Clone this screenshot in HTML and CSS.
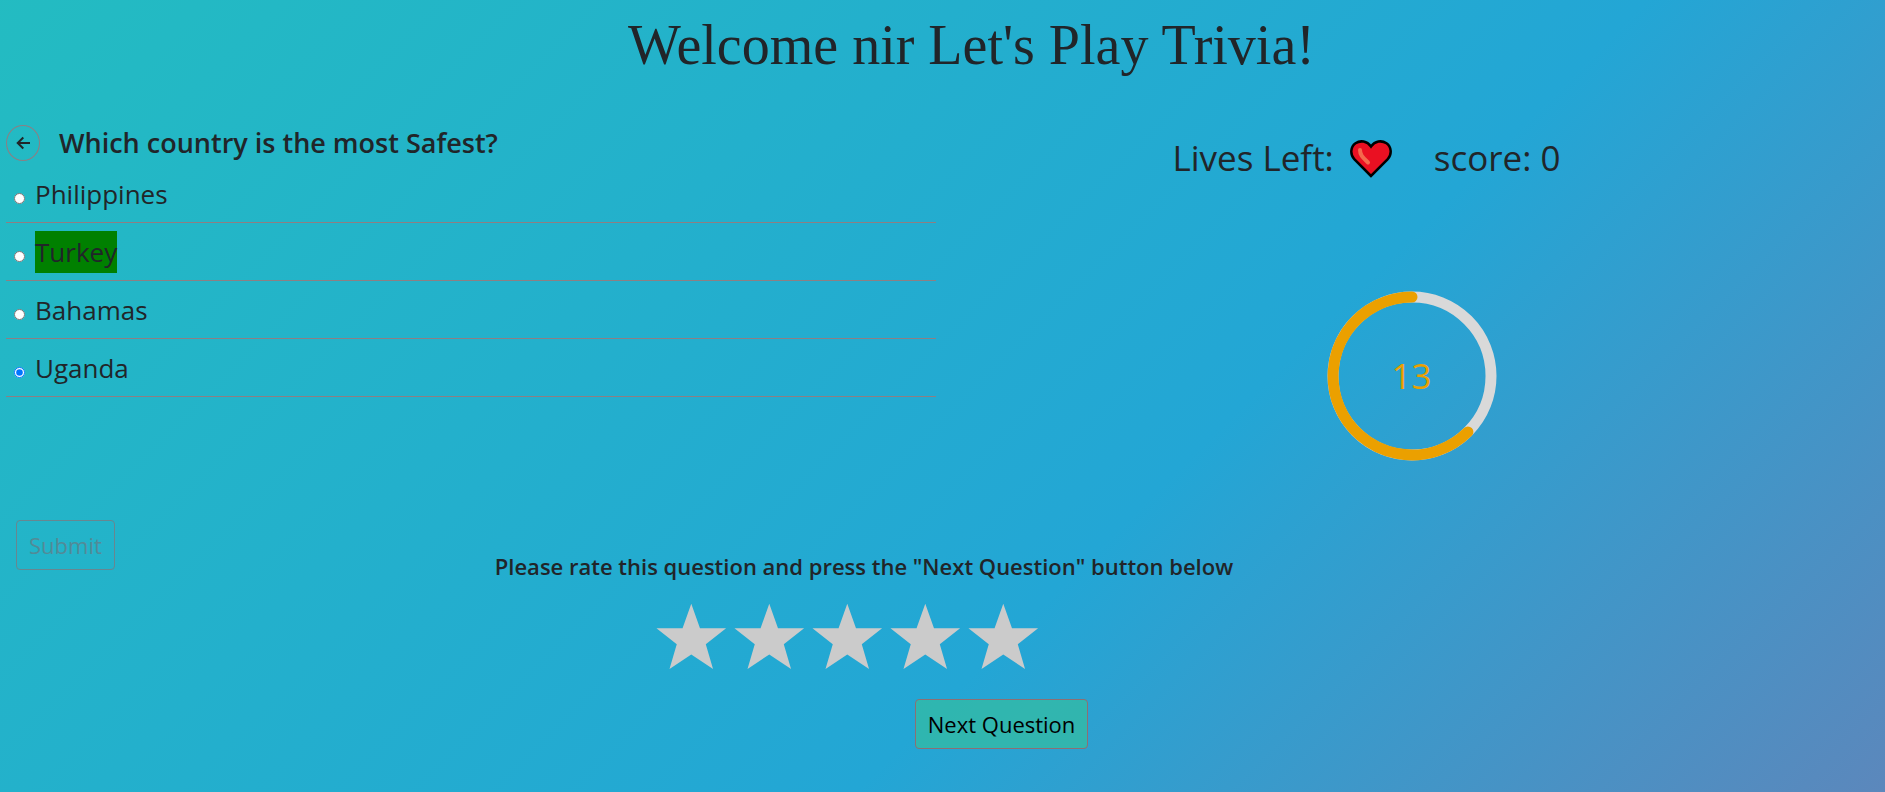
FILE: index.html
```html
<!DOCTYPE html>
<html lang="en">
<head>
<meta charset="utf-8">
<title>Trivia</title>
<link rel="stylesheet" href="styles.css">
</head>
<body>
<h1 class="title">Welcome nir Let's Play Trivia!</h1>
<main class="game">
  <form class="quiz">
    <div class="quiz-head">
      <button class="back" type="button" aria-label="Back">
        <svg class="back-icon" viewBox="0 0 16 16" fill="none" stroke="currentColor" stroke-width="2" stroke-linejoin="miter"><path d="M15 8H3M8.300 2.500 2.700 8l5.600 5.500"/></svg>
      </button>
      <h2 class="question">Which country is the most Safest?</h2>
    </div>
    <ul class="answers">
      <li class="answer"><input class="radio" type="radio" name="answer" id="a1"><label for="a1">Philippines</label></li>
      <li class="answer"><input class="radio" type="radio" name="answer" id="a2"><label class="correct" for="a2">Turkey</label></li>
      <li class="answer"><input class="radio" type="radio" name="answer" id="a3"><label for="a3">Bahamas</label></li>
      <li class="answer"><input class="radio" type="radio" name="answer" id="a4" checked><label for="a4">Uganda</label></li>
    </ul>
  </form>
  <section class="status">
    <div class="stats">
      <span>Lives Left:</span>
      <svg class="heart" viewBox="0 0 42 38"><path d="M21 36 4.500 19.500C-.5 14 .8 6.500 5.500 3.200 10.500 0 17 1 21 6.500 25 1 31.500 0 36.500 3.200 41.200 6.500 42.500 14 37.500 19.500Z" fill="#ea1022" stroke="#000" stroke-width="2.500"/><path d="M10 10c0 5 3 7.500 8 12.500" fill="none" stroke="#f4694d" stroke-width="4" stroke-linecap="round"/></svg>
      <span class="score">score: 0</span>
    </div>
    <div class="timer">
      <svg class="ring" viewBox="0 0 170 170" fill="none" stroke-width="11"><circle cx="85" cy="85" r="79" stroke="#d9d9d9"/><path d="M85 6A79 79 0 1 0 140.900 140.900" stroke="#eba000" stroke-linecap="round"/></svg>
      <span class="seconds">13</span>
    </div>
  </section>
</main>
<section class="bottom">
  <button class="btn" type="button" disabled>Submit</button>
  <div class="rating">
    <h3 class="prompt">Please rate this question and press the "Next Question" button below</h3>
    <div class="stars">
      <button class="star" type="button" aria-label="1 star"><svg viewBox="0 0 51 48"><path d="m25 1 6 17h18L35 29l5 17-15-10-15 10 5-17L1 18h18z"/></svg></button>
      <button class="star" type="button" aria-label="2 stars"><svg viewBox="0 0 51 48"><path d="m25 1 6 17h18L35 29l5 17-15-10-15 10 5-17L1 18h18z"/></svg></button>
      <button class="star" type="button" aria-label="3 stars"><svg viewBox="0 0 51 48"><path d="m25 1 6 17h18L35 29l5 17-15-10-15 10 5-17L1 18h18z"/></svg></button>
      <button class="star" type="button" aria-label="4 stars"><svg viewBox="0 0 51 48"><path d="m25 1 6 17h18L35 29l5 17-15-10-15 10 5-17L1 18h18z"/></svg></button>
      <button class="star" type="button" aria-label="5 stars"><svg viewBox="0 0 51 48"><path d="m25 1 6 17h18L35 29l5 17-15-10-15 10 5-17L1 18h18z"/></svg></button>
    </div>
    <button class="btn next" type="button">Next Question</button>
  </div>
</section>
</body>
</html>
```
FILE: styles.css
```css
* { box-sizing: border-box; }
body {
  margin: 0;
  min-height: 100vh;
  font-family: "Open Sans", "Noto Sans", sans-serif;
  color: #212529;
  background: linear-gradient(-45deg, #ee7752, #e73c7e, #23a6d5, #23d5ab);
  background-size: 400% 400%;
  background-position: 13% 50%;
}
.title {
  margin: 0;
  padding: 12px 0 0 58px;
  font: 400 56px/66px "Liberation Serif", serif;
  text-align: center;
}
.game {
  display: grid;
  grid-template-columns: 1fr 1fr;
  padding: 44px 3px 0 0;
}
.quiz { padding: 0 5px 0 6px; }
.quiz-head {
  display: flex;
  align-items: center;
  gap: 19px;
  height: 42px;
}
.back {
  display: flex;
  align-items: center;
  justify-content: center;
  width: 34px;
  height: 36px;
  padding: 0;
  border: 1px solid #8d7f83;
  border-radius: 50%;
  background: transparent;
  color: #212529;
}
.back-icon { width: 16px; height: 16px; }
.question { margin: 0; font-size: 27px; font-weight: 600; line-height: 42px; }
.answers { margin: 0; padding: 1px 0 0; list-style: none; }
.answer {
  display: flex;
  align-items: center;
  height: 58px;
  padding: 8px;
  border-bottom: 1px solid #8d7f83;
  font-size: 26px;
  line-height: 42px;
}
.radio {
  width: 11px;
  height: 11px;
  margin: 9px 10px 0 0;
}
.correct { background: #008000; }
.status { padding-top: 6px; }
.stats {
  display: flex;
  align-items: center;
  justify-content: center;
  padding-right: 90px;
  font-size: 35px;
  line-height: 60px;
}
.heart { width: 42px; height: 38px; margin: 2px 42px 0 16px; }
.timer {
  display: grid;
  place-items: center;
  padding-top: 103px;
}
.ring, .seconds { grid-area: 1 / 1; }
.ring { width: 170px; height: 170px; }
.seconds { color: #eba000; font-size: 35px; line-height: 48px; }
.bottom {
  display: flex;
  align-items: flex-start;
  padding: 59px 16px 0;
}
.btn {
  height: 50px;
  padding: 0 12px;
  border: 1px solid #8d6f73;
  border-radius: 4px;
  background: transparent;
  color: #000;
  font: 400 22px/48px "Open Sans", "Noto Sans", sans-serif;
}
.btn:disabled { opacity: .65; color: #6c757d; }
.rating {
  display: flex;
  flex-direction: column;
  align-items: flex-start;
  padding: 30px 0 0 380px;
}
.prompt { margin: 0; font-size: 22px; font-weight: 600; line-height: 32px; white-space: nowrap; }
.stars { display: flex; gap: 4px; padding: 20px 0 27px 160px; }
.star { width: 74px; height: 70px; padding: 0; border: 0; background: none; }
.star svg { display: block; width: 74px; height: 70px; fill: #cbcbcb; }
.next { margin-left: 420px; background: rgba(53, 190, 160, .7); }
```
